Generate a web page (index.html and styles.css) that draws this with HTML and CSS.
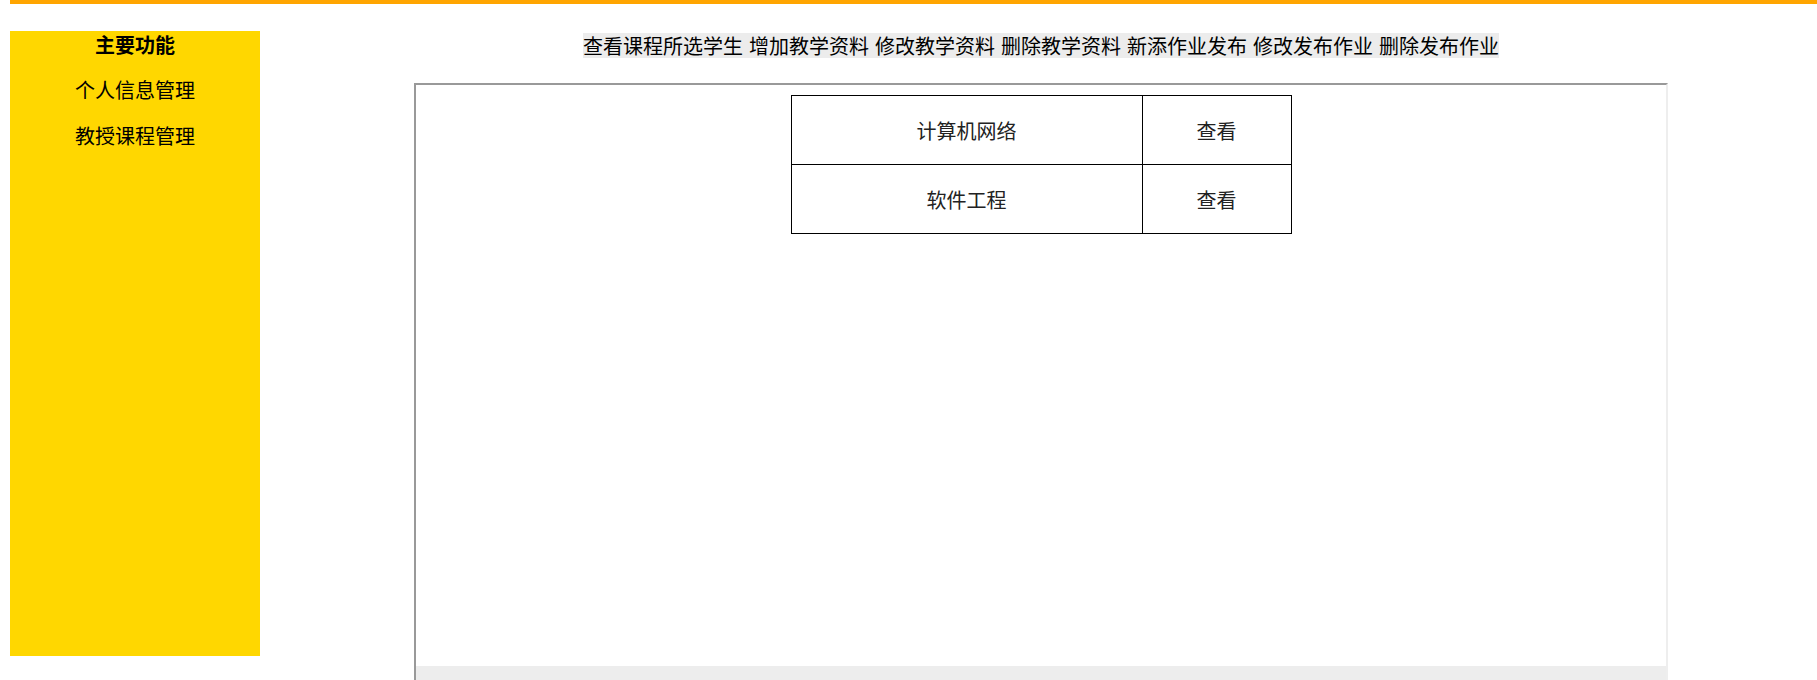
FILE: index.html
```html
<!DOCTYPE html>
<html lang="zh-CN">
<head>
    <meta charset="UTF-8">
    <meta name="viewport" content="width=device-width, initial-scale=1.0">
    <title>教师主页</title>
    <link rel="stylesheet" href="styles.css">
</head>
<body>
    <div class="topbar"></div>
    <div class="wrapper">
        <div class="sidebar">
            <div class="side-title">主要功能</div>
            <ul class="side-menu">
                <li><a href="#">个人信息管理</a></li>
                <li><a href="#">教授课程管理</a></li>
            </ul>
        </div>
        <div class="main">
            <div class="nav">
                <span class="nav-links"><a href="#">查看课程所选学生</a> <a href="#">增加教学资料</a> <a href="#">修改教学资料</a> <a href="#">删除教学资料</a> <a href="#">新添作业发布</a> <a href="#">修改发布作业</a> <a href="#">删除发布作业</a></span>
            </div>
            <div class="frame">
                <div class="frame-body">
                    <table class="course-table">
                        <tr>
                            <td class="course-name">计算机网络</td>
                            <td class="course-op"><a href="#">查看</a></td>
                        </tr>
                        <tr>
                            <td class="course-name">软件工程</td>
                            <td class="course-op"><a href="#">查看</a></td>
                        </tr>
                    </table>
                </div>
                <div class="frame-scroll"></div>
            </div>
        </div>
    </div>
</body>
</html>
```

FILE: styles.css
```css
html, body {
    margin: 0;
    padding: 0;
    overflow: hidden;
    background: #fff;
}
body {
    font-family: "Noto Sans CJK SC", "Microsoft YaHei", sans-serif;
    font-size: 20px;
    color: #000;
}
a {
    color: inherit;
    text-decoration: none;
}
.topbar {
    height: 4px;
    margin-left: 10px;
    background-color: #ffa500;
}
.wrapper {
    display: flex;
    align-items: flex-start;
}
.sidebar {
    width: 250px;
    height: 625px;
    margin: 27px 0 0 10px;
    background-color: #ffd700;
    text-align: center;
}
.side-title {
    font-weight: bold;
    line-height: 28px;
}
.side-menu {
    list-style: none;
    margin: 8px 0 0 0;
    padding: 0;
}
.side-menu li {
    line-height: 46px;
}
.main {
    flex: 1;
    padding-left: 5px;
    text-align: center;
}
.nav {
    margin-top: 27px;
    height: 25px;
}
.nav-links {
    display: inline-block;
    line-height: 25px;
    word-spacing: 1.5px;
    background-color: #ececec;
}
.frame {
    width: 1250px;
    height: 596px;
    margin: 27px auto 0;
    border: 2px solid;
    border-color: #999 #eee #eee #999;
    display: flex;
    flex-direction: column;
}
.frame-body {
    flex: 1;
    padding-top: 10px;
}
.frame-scroll {
    height: 15px;
    background-color: #ededed;
}
.course-table {
    width: 501px;
    margin: 0 auto;
    border-collapse: collapse;
    color: #222;
}
.course-table td {
    height: 68px;
    padding: 0;
    border: 1px solid #000;
    text-align: center;
}
.course-name {
    width: 350px;
}
```
